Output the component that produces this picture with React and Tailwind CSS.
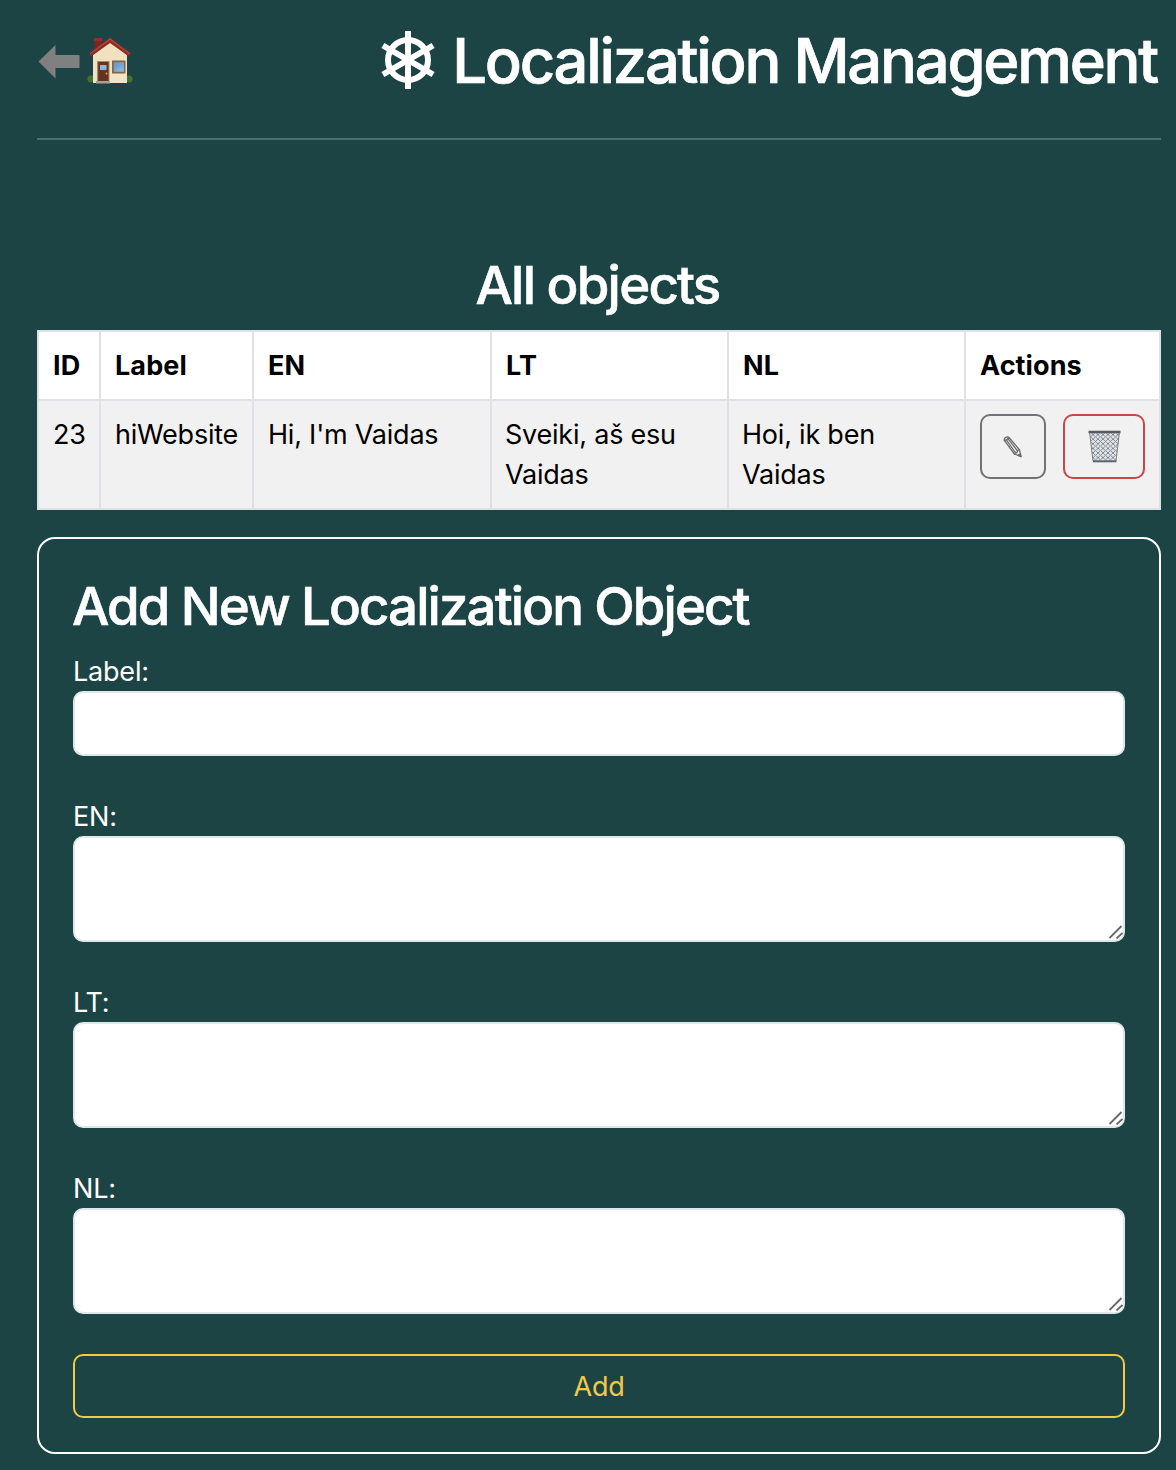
import React from "react";

function BackArrow() {
  return (
    <svg width="42" height="36" viewBox="0 0 42 36">
      <path d="M0.5 17.5 L17.5 1 V11 H41.5 V24 H17.5 V34.5 Z" fill="#808080" />
    </svg>
  );
}

function House() {
  return (
    <svg width="46" height="48" viewBox="0 0 46 48">
      <defs>
        <linearGradient id="wall" x1="0" y1="0" x2="0" y2="1">
          <stop offset="0" stopColor="#efe0bd" />
          <stop offset="1" stopColor="#f1e3c6" />
        </linearGradient>
        <linearGradient id="glass" x1="0" y1="0" x2="1" y2="1">
          <stop offset="0" stopColor="#5f93c4" />
          <stop offset="1" stopColor="#8dbbe4" />
        </linearGradient>
      </defs>
      <rect x="7.5" y="2" width="7.5" height="13" fill="#7c2621" />
      <rect x="6.8" y="1" width="8.6" height="3" fill="#8f302a" />
      <circle cx="4" cy="42" r="3.6" fill="#456f2c" />
      <circle cx="42" cy="42" r="3.6" fill="#456f2c" />
      <path d="M6 18 L23 4 L40 18 V46 H6 Z" fill="url(#wall)" />
      <path d="M23 1 L43.5 16.5 L42 19.5 L23 6 L4 19.5 L2.5 16.5 Z" fill="#8d2b25" />
      <path d="M23 1 L43.5 16.5 L43 17.5 L23 3 L3 17.5 L2.5 16.5 Z" fill="#b8433a" />
      <rect x="10" y="24" width="12.5" height="21" fill="#a98763" />
      <rect x="11.2" y="25" width="10.3" height="20" fill="#653322" />
      <rect x="13" y="28" width="6.5" height="5" fill="#86b8dc" />
      <circle cx="19.5" cy="36.5" r="0.9" fill="#d9b060" />
      <rect x="9" y="44" width="14" height="2.5" fill="#a9a096" />
      <rect x="25" y="23.5" width="13.5" height="13" fill="#866447" />
      <rect x="26.7" y="25.2" width="10.2" height="9.6" fill="url(#glass)" />
    </svg>
  );
}

function Wheel() {
  return (
    <svg width="54" height="58" viewBox="0 0 54 58" fill="none" stroke="#fff">
      <circle cx="27" cy="29" r="20" strokeWidth="6" />
      <path d="M27 0 V58 M1.9 14.5 L52.1 43.5 M52.1 14.5 L1.9 43.5" strokeWidth="6" />
    </svg>
  );
}

function Pencil() {
  return (
    <svg width="20" height="22" viewBox="0 0 20 22" fill="none" stroke="#6c6f72" strokeWidth="1.3" strokeLinejoin="round" strokeLinecap="round">
      <path d="M1.2 4.2 Q1 1.8 3.2 1.1 Q5.2 0.6 6.6 2.2 L16.4 13.6 L18 20.6 L11.4 18 Z" />
      <path d="M3.2 3.6 L12.6 17 M5 2.6 L14.6 15 M1.4 4.6 L6.4 2.2 M11.4 18 L12.8 16.4 L13.8 16.8 L14.8 14.8 L16.4 13.6" />
      <path d="M14.8 19.2 L17.4 17.8 L18 20.6 Z" fill="#55585a" />
    </svg>
  );
}

function Trash() {
  return (
    <svg width="33" height="33" viewBox="0 0 33 33">
      <defs>
        <pattern id="mesh" width="5" height="4.6" patternUnits="userSpaceOnUse">
          <path d="M0 0 L5 4.6 M5 0 L0 4.6" stroke="#7d848c" strokeWidth="0.9" />
        </pattern>
      </defs>
      <path d="M1.5 2 H31.5 L28 31 H5 Z" fill="#dfe2e6" />
      <path d="M1.5 2 H31.5 L28 31 H5 Z" fill="url(#mesh)" stroke="#7b8188" strokeWidth="1" />
      <path d="M0.5 2 H32.5" stroke="#555b64" strokeWidth="2.6" />
      <path d="M5 31.4 H28.4" stroke="#5f656d" strokeWidth="1.8" />
    </svg>
  );
}

function Grip() {
  return (
    <svg className="absolute right-[2px] bottom-[3px]" width="14" height="14" viewBox="0 0 14 14" stroke="#666" strokeWidth="1.8">
      <path d="M0.5 13 L12.5 1 M7.5 13.5 L13.5 8" />
    </svg>
  );
}

const th = "h-[67px] p-0 pl-[14px] text-left align-top pt-[14px] font-bold bg-white tracking-[0.1px]";
const td = "h-[107px] p-0 pl-[14px] text-left align-top pt-[14px] bg-[#f1f1f1]";

function Field({ label, area }) {
  return (
    <label className={area ? "block h-[186px]" : "block h-[145px]"}>
      <span className="block h-[40px] pt-px text-[27px] leading-[40px] tracking-[-0.2px]">{label}</span>
      {area ? (
        <span className="relative block h-[106px]">
          <textarea className="block h-[106px] w-full resize-none rounded-[10px] border-2 border-[#dee8ea] bg-white p-3 text-black outline-none" />
          <Grip />
        </span>
      ) : (
        <input className="block h-[65px] w-full rounded-[10px] border-2 border-[#dee8ea] bg-white px-5 text-black outline-none" />
      )}
    </label>
  );
}

export default function App() {
  return (
    <div className="h-[1470px] w-[1176px] overflow-hidden bg-[#1c4445] pr-[15px] pl-[37px] font-['Inter',sans-serif] text-white">
      <header className="flex h-[140px] items-start justify-between border-b-2 border-[#497071]">
        <nav className="flex pt-[37px] pl-[1px]">
          <a className="mt-[7px] block"><BackArrow /></a>
          <a className="ml-[7px] block"><House /></a>
        </nav>
        <h1 className="mr-[4px] flex pt-[31px] text-[61.5px] leading-[62px] font-medium whitespace-nowrap [-webkit-text-stroke:0.7px_white]">
          <Wheel />
          <span className="-mt-px ml-[17px] tracking-[-2.23px]">Localization Management</span>
        </h1>
      </header>

      <h2 className="mt-[111px] h-[79px] pr-[3px] text-center text-[52.8px] leading-[68px] font-medium tracking-[-1.75px] [-webkit-text-stroke:0.6px_white]">All objects</h2>

      <table className="w-[1124px] table-fixed border-separate border-spacing-[2px] bg-[#dee2e6] text-[27px] leading-[40px] tracking-[-0.22px] text-black">
        <colgroup>
          <col className="w-[60px]" />
          <col className="w-[151px]" />
          <col className="w-[236px]" />
          <col className="w-[235px]" />
          <col className="w-[235px]" />
          <col className="w-[193px]" />
        </colgroup>
        <thead>
          <tr>
            <th className={th}>ID</th>
            <th className={th}>Label</th>
            <th className={th}>EN</th>
            <th className={th}>LT</th>
            <th className={th}>NL</th>
            <th className={th}>Actions</th>
          </tr>
        </thead>
        <tbody>
          <tr>
            <td className={td}>23</td>
            <td className={td}>hiWebsite</td>
            <td className={td}>Hi, I'm Vaidas</td>
            <td className={td}><div className="-ml-px">Sveiki, aš esu<br />Vaidas</div></td>
            <td className={td}><div className="-ml-px">Hoi, ik ben<br />Vaidas</div></td>
            <td className={td}>
              <div className="-mt-px flex gap-[17px]">
                <button className="flex h-[65px] w-[66px] items-center justify-center rounded-[10px] border-2 border-[#6f7376]"><Pencil /></button>
                <button className="flex h-[65px] w-[82px] items-center justify-center rounded-[10px] border-2 border-[#cb444a]"><Trash /></button>
              </div>
            </td>
          </tr>
        </tbody>
      </table>

      <section className="mt-[27px] h-[917px] rounded-[18px] border-2 border-white px-[34px] pt-[33px]">
        <h2 className="-ml-px h-[79px] text-[52.8px] leading-[68px] font-medium tracking-[-1.9px] whitespace-nowrap [-webkit-text-stroke:0.6px_white]">Add New Localization Object</h2>
        <Field label="Label:" />
        <Field label="EN:" area />
        <Field label="LT:" area />
        <Field label="NL:" area />
        <button className="block h-[64px] w-full rounded-[10px] border-2 border-[#f6c945] pt-px text-[27px] leading-[60px] tracking-[-0.2px] text-[#f6c945]">Add</button>
      </section>
    </div>
  );
}
